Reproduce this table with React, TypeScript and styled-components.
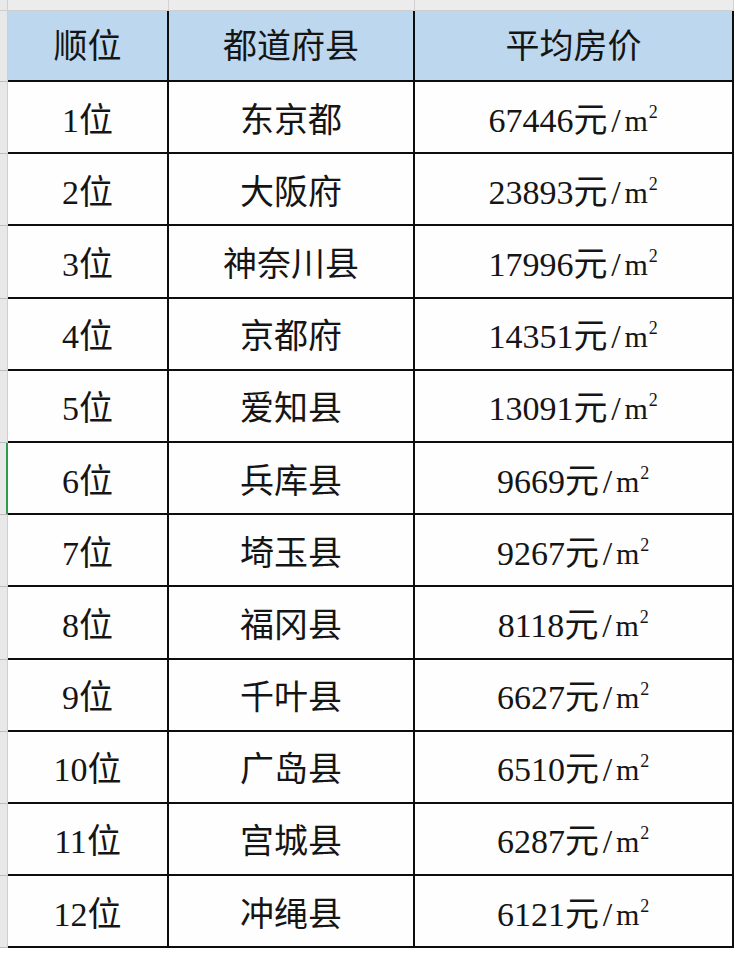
import styled, { createGlobalStyle } from 'styled-components';

const GlobalStyle = createGlobalStyle`
  html, body {
    margin: 0;
    padding: 0;
    background: #ffffff;
  }
`;

type Row = {
  rank: string;
  pref: string;
  price: string;
};

const rows: Row[] = [
  { rank: '1', pref: '东京都', price: '67446' },
  { rank: '2', pref: '大阪府', price: '23893' },
  { rank: '3', pref: '神奈川县', price: '17996' },
  { rank: '4', pref: '京都府', price: '14351' },
  { rank: '5', pref: '爱知县', price: '13091' },
  { rank: '6', pref: '兵库县', price: '9669' },
  { rank: '7', pref: '埼玉县', price: '9267' },
  { rank: '8', pref: '福冈县', price: '8118' },
  { rank: '9', pref: '千叶县', price: '6627' },
  { rank: '10', pref: '广岛县', price: '6510' },
  { rank: '11', pref: '宫城县', price: '6287' },
  { rank: '12', pref: '冲绳县', price: '6121' },
];

const Sheet = styled.div`
  display: grid;
  grid-template-columns: 8px 161px 246px 319px 1fr;
  grid-template-rows: 11px 71px repeat(12, 72.2px);
  width: 740px;
  height: 954px;
  overflow: hidden;
  font-family: 'Liberation Serif', 'Noto Sans CJK SC', serif;
  color: #151515;
`;

const Corner = styled.div`
  background: #e9e9e9;
  border-right: 1px solid #cfcfcf;
  border-bottom: 1px solid #cfcfcf;
`;

const ColHead = styled.div`
  background: #ececec;
  border-right: 1px solid #d2d2d2;
  border-bottom: 1px solid #cfcfcf;
`;

const RowHead = styled.div<{ $selected?: boolean }>`
  background: #e8e8e8;
  border-right: 1px solid ${(p) => (p.$selected ? '#2a9d4e' : '#cfcfcf')};
  box-shadow: ${(p) => (p.$selected ? 'inset -1px 0 0 #2a9d4e' : 'none')};
  border-bottom: 1px solid #bdbdbd;
`;

const Filler = styled.div`
  background: #ffffff;
`;

const Cell = styled.div<{ $head?: boolean }>`
  display: flex;
  align-items: center;
  justify-content: center;
  padding-top: ${(p) => (p.$head ? '2px' : '7px')};
  box-sizing: border-box;
  background: ${(p) => (p.$head ? '#bdd7ee' : '#fefefe')};
  border-right: 2px solid #0d0d0d;
  border-bottom: 2px solid #0d0d0d;
  font-size: 34px;
  line-height: 1;
  white-space: nowrap;
`;

const Slash = styled.span`
  display: inline-block;
  width: 17px;
  text-align: center;
`;

const Unit = styled.span`
  display: inline-block;
  width: 34px;
  text-align: left;
  font-size: 30px;

  sup {
    font-size: 18px;
    line-height: 0;
    vertical-align: 13px;
    margin-left: 1px;
  }
`;

export default function App() {
  return (
    <>
      <GlobalStyle />
      <Sheet>
        <Corner />
        <ColHead />
        <ColHead />
        <ColHead />
        <Filler />

        <RowHead />
        <Cell $head>顺位</Cell>
        <Cell $head>都道府县</Cell>
        <Cell $head>平均房价</Cell>
        <Filler />

        {rows.map((r) => (
          <Row key={r.rank} row={r} />
        ))}
      </Sheet>
    </>
  );
}

function Row({ row }: { row: Row }) {
  return (
    <>
      <RowHead $selected={row.rank === '6'} />
      <Cell>{row.rank}位</Cell>
      <Cell>{row.pref}</Cell>
      <Cell>
        {row.price}元<Slash>/</Slash>
        <Unit>
          m<sup>2</sup>
        </Unit>
      </Cell>
      <Filler />
    </>
  );
}
